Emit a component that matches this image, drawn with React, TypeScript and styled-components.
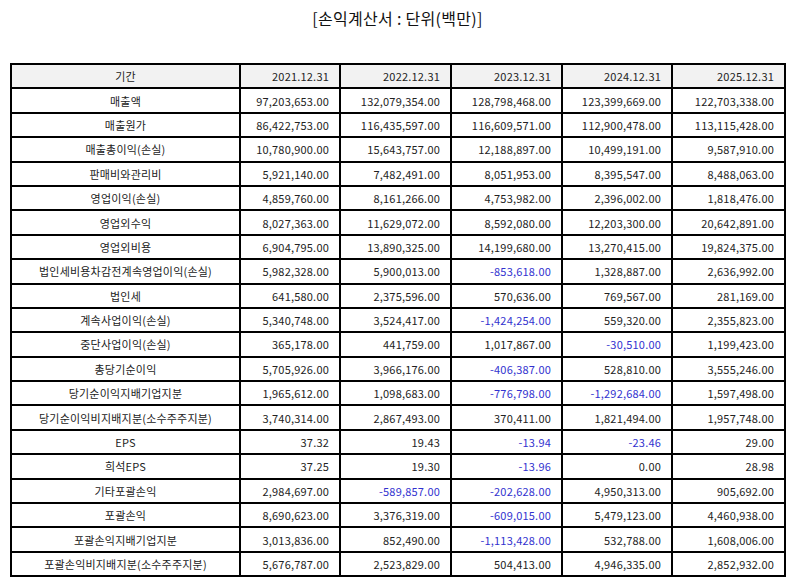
import React from 'react';
import styled, { createGlobalStyle } from 'styled-components';

const GlobalStyle = createGlobalStyle`
  html, body {
    margin: 0;
    padding: 0;
    background: #fff;
  }
  body {
    font-family: 'Noto Sans CJK KR', 'Noto Sans', sans-serif;
    color: #222;
  }
`;

interface Row {
  label: string;
  values: string[];
}

const periods = ['2021.12.31', '2022.12.31', '2023.12.31', '2024.12.31', '2025.12.31'];

const rows: Row[] = [
  { label: '매출액', values: ['97,203,653.00', '132,079,354.00', '128,798,468.00', '123,399,669.00', '122,703,338.00'] },
  { label: '매출원가', values: ['86,422,753.00', '116,435,597.00', '116,609,571.00', '112,900,478.00', '113,115,428.00'] },
  { label: '매출총이익(손실)', values: ['10,780,900.00', '15,643,757.00', '12,188,897.00', '10,499,191.00', '9,587,910.00'] },
  { label: '판매비와관리비', values: ['5,921,140.00', '7,482,491.00', '8,051,953.00', '8,395,547.00', '8,488,063.00'] },
  { label: '영업이익(손실)', values: ['4,859,760.00', '8,161,266.00', '4,753,982.00', '2,396,002.00', '1,818,476.00'] },
  { label: '영업외수익', values: ['8,027,363.00', '11,629,072.00', '8,592,080.00', '12,203,300.00', '20,642,891.00'] },
  { label: '영업외비용', values: ['6,904,795.00', '13,890,325.00', '14,199,680.00', '13,270,415.00', '19,824,375.00'] },
  { label: '법인세비용차감전계속영업이익(손실)', values: ['5,982,328.00', '5,900,013.00', '-853,618.00', '1,328,887.00', '2,636,992.00'] },
  { label: '법인세', values: ['641,580.00', '2,375,596.00', '570,636.00', '769,567.00', '281,169.00'] },
  { label: '계속사업이익(손실)', values: ['5,340,748.00', '3,524,417.00', '-1,424,254.00', '559,320.00', '2,355,823.00'] },
  { label: '중단사업이익(손실)', values: ['365,178.00', '441,759.00', '1,017,867.00', '-30,510.00', '1,199,423.00'] },
  { label: '총당기순이익', values: ['5,705,926.00', '3,966,176.00', '-406,387.00', '528,810.00', '3,555,246.00'] },
  { label: '당기순이익지배기업지분', values: ['1,965,612.00', '1,098,683.00', '-776,798.00', '-1,292,684.00', '1,597,498.00'] },
  { label: '당기순이익비지배지분(소수주주지분)', values: ['3,740,314.00', '2,867,493.00', '370,411.00', '1,821,494.00', '1,957,748.00'] },
  { label: 'EPS', values: ['37.32', '19.43', '-13.94', '-23.46', '29.00'] },
  { label: '희석EPS', values: ['37.25', '19.30', '-13.96', '0.00', '28.98'] },
  { label: '기타포괄손익', values: ['2,984,697.00', '-589,857.00', '-202,628.00', '4,950,313.00', '905,692.00'] },
  { label: '포괄손익', values: ['8,690,623.00', '3,376,319.00', '-609,015.00', '5,479,123.00', '4,460,938.00'] },
  { label: '포괄손익지배기업지분', values: ['3,013,836.00', '852,490.00', '-1,113,428.00', '532,788.00', '1,608,006.00'] },
  { label: '포괄손익비지배지분(소수주주지분)', values: ['5,676,787.00', '2,523,829.00', '504,413.00', '4,946,335.00', '2,852,932.00'] },
];

const colWidths = [229, 100, 111, 111, 110, 113];

const Page = styled.div`
  padding: 0 9px 0 10px;
`;

const Title = styled.h1`
  margin: 0;
  height: 63px;
  padding-top: 4px;
  box-sizing: border-box;
  text-align: center;
  font-size: 16px;
  font-weight: 400;
  letter-spacing: 0.3px;
  line-height: 28px;
  color: #111;
`;

const Table = styled.table`
  border-collapse: collapse;
  table-layout: fixed;
  width: 774px;
  border: 2px solid #000;
  font-size: 11px;
  letter-spacing: 0.2px;
`;

const HeadCell = styled.th<{ $align: 'center' | 'right' }>`
  height: 24.4px;
  padding: 0 10px;
  box-sizing: border-box;
  border: 2px solid #000;
  background: #f2f2f2;
  font-weight: 400;
  text-align: ${(p) => p.$align};
  white-space: nowrap;
`;

const LabelCell = styled.td`
  height: 24.4px;
  padding: 0 2px;
  box-sizing: border-box;
  border: 2px solid #000;
  text-align: center;
  white-space: nowrap;
`;

const ValueCell = styled.td<{ $negative: boolean }>`
  height: 24.4px;
  padding: 0 10px 0 2px;
  box-sizing: border-box;
  border: 2px solid #000;
  text-align: right;
  white-space: nowrap;
  color: ${(p) => (p.$negative ? '#3232cf' : '#222')};
`;

export default function App() {
  return (
    <>
      <GlobalStyle />
      <Page>
        <Title>[손익계산서 : 단위(백만)]</Title>
        <Table>
          <colgroup>
            {colWidths.map((w, i) => (
              <col key={i} style={{ width: w }} />
            ))}
          </colgroup>
          <thead>
            <tr>
              <HeadCell $align="center">기간</HeadCell>
              {periods.map((p) => (
                <HeadCell key={p} $align="right">
                  {p}
                </HeadCell>
              ))}
            </tr>
          </thead>
          <tbody>
            {rows.map((r) => (
              <tr key={r.label}>
                <LabelCell>{r.label}</LabelCell>
                {r.values.map((v, i) => (
                  <ValueCell key={i} $negative={v.startsWith('-')}>
                    {v}
                  </ValueCell>
                ))}
              </tr>
            ))}
          </tbody>
        </Table>
      </Page>
    </>
  );
}
